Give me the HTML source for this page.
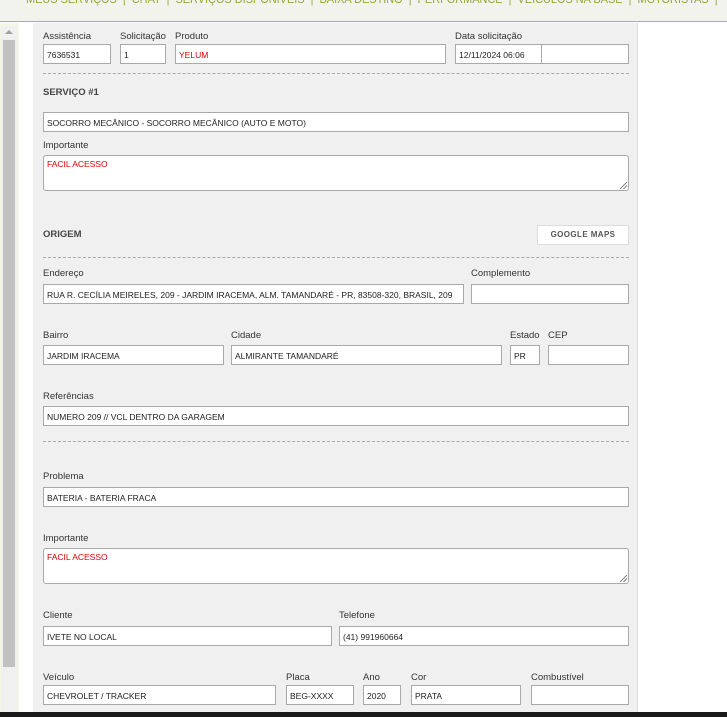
<!DOCTYPE html>
<html><head><meta charset="utf-8"><style>
*{margin:0;padding:0;box-sizing:border-box}
body{width:727px;height:717px;overflow:hidden;background:#fff;position:relative;font-family:"Liberation Sans",Tahoma,sans-serif;font-size:9px;color:#333}
.a{position:absolute}
.nav{left:0;top:0;width:727px;height:22px;background:#f3f3ee;border-bottom:1px solid #a8bc50;overflow:hidden}
.nav span{position:absolute;top:-8px;left:26px;white-space:nowrap;color:#94a83a;font-size:12px;transform:scaleX(0.91);transform-origin:left top}
.lc{left:0;top:23px;width:19px;height:694px;background:#f6f6e4}
.track{left:1px;top:26px;width:16px;height:686px;background:#f0f0f0}
.thumb{left:3px;top:40px;width:12px;height:627px;background:#c1c1c1}
.arr{left:5px;top:30px;width:0;height:0;border-left:4px solid transparent;border-right:4px solid transparent;border-bottom:4px solid #a0a0a0}
.panel{left:33px;top:23px;width:605px;height:694px;background:#f0f0f0;border-right:1px solid #ddd}
.l{position:absolute;font-size:9.5px;color:#333;white-space:nowrap}
.i{position:absolute;height:20px;background:#fff;border:1px solid #a9a9a9;font-size:8.5px;padding:5px 3px;white-space:nowrap;overflow:hidden;color:#222}
.t{height:36px;border-radius:3px;padding:3px 3px}
.t::after{content:"";position:absolute;right:1px;bottom:1px;width:7px;height:7px;background:linear-gradient(135deg,transparent 45%,#888 45%,#888 55%,transparent 55%,transparent 70%,#888 70%,#888 80%,transparent 80%)}
.r{color:#d00}
.d{position:absolute;left:43px;width:586px;border-top:1px dashed #aaa}
.h{position:absolute;left:43px;font-weight:bold;font-size:9.5px;color:#444}
.btn{left:537px;top:225px;width:92px;height:20px;background:#fff;border:1px solid #ddd;font-size:8px;font-weight:bold;color:#555;text-align:center;line-height:18px;letter-spacing:.4px}
.bot{left:0;top:712px;width:727px;height:5px;background:#1a1a1a}
</style></head><body>
<div class="a nav"><span>MEUS SERVIÇOS &nbsp;|&nbsp; CHAT &nbsp;|&nbsp; SERVIÇOS DISPONÍVEIS &nbsp;|&nbsp; BAIXA DESTINO &nbsp;|&nbsp; PERFORMANCE &nbsp;|&nbsp; VEÍCULOS NA BASE &nbsp;|&nbsp; MOTORISTAS &nbsp;|</span></div>
<div class="a lc"></div><div class="a track"></div><div class="a thumb"></div><div class="a arr"></div>
<div class="a panel"></div>

<div class="l" style="left:43px;top:31px">Assistência</div>
<div class="l" style="left:120px;top:31px">Solicitação</div>
<div class="l" style="left:175px;top:31px">Produto</div>
<div class="l" style="left:455px;top:31px">Data solicitação</div>
<div class="i" style="left:43px;top:44px;width:68px">7636531</div>
<div class="i" style="left:120px;top:44px;width:46px">1</div>
<div class="i r" style="left:175px;top:44px;width:271px">YELUM</div>
<div class="i" style="left:455px;top:44px;width:87px">12/11/2024 06:06</div>
<div class="i" style="left:541px;top:44px;width:88px"></div>
<div class="d" style="top:73px"></div>
<div class="h" style="top:87px">SERVIÇO #1</div>
<div class="i" style="left:43px;top:112px;width:586px">SOCORRO MECÂNICO - SOCORRO MECÂNICO (AUTO E MOTO)</div>
<div class="l" style="left:43px;top:140px">Importante</div>
<div class="i t r" style="left:43px;top:155px;width:586px">FACIL ACESSO</div>
<div class="h" style="top:229px">ORIGEM</div>
<div class="a btn">GOOGLE MAPS</div>
<div class="d" style="top:257px"></div>
<div class="l" style="left:43px;top:268px">Endereço</div>
<div class="l" style="left:471px;top:268px">Complemento</div>
<div class="i" style="left:43px;top:284px;width:421px">RUA R. CECÍLIA MEIRELES, 209 - JARDIM IRACEMA, ALM. TAMANDARÉ - PR, 83508-320, BRASIL, 209</div>
<div class="i" style="left:471px;top:284px;width:158px"></div>
<div class="l" style="left:43px;top:330px">Bairro</div>
<div class="l" style="left:231px;top:330px">Cidade</div>
<div class="l" style="left:510px;top:330px">Estado</div>
<div class="l" style="left:548px;top:330px">CEP</div>
<div class="i" style="left:43px;top:345px;width:181px">JARDIM IRACEMA</div>
<div class="i" style="left:231px;top:345px;width:271px">ALMIRANTE TAMANDARÉ</div>
<div class="i" style="left:510px;top:345px;width:30px">PR</div>
<div class="i" style="left:548px;top:345px;width:81px"></div>
<div class="l" style="left:43px;top:391px">Referências</div>
<div class="i" style="left:43px;top:406px;width:586px">NUMERO 209 // VCL DENTRO DA GARAGEM</div>
<div class="d" style="top:441px"></div>
<div class="l" style="left:43px;top:471px">Problema</div>
<div class="i" style="left:43px;top:487px;width:586px">BATERIA - BATERIA FRACA</div>
<div class="l" style="left:43px;top:533px">Importante</div>
<div class="i t r" style="left:43px;top:548px;width:586px">FACIL ACESSO</div>
<div class="l" style="left:43px;top:610px">Cliente</div>
<div class="l" style="left:339px;top:610px">Telefone</div>
<div class="i" style="left:43px;top:626px;width:289px">IVETE NO LOCAL</div>
<div class="i" style="left:339px;top:626px;width:290px">(41) 991960664</div>
<div class="l" style="left:43px;top:672px">Veículo</div>
<div class="l" style="left:286px;top:672px">Placa</div>
<div class="l" style="left:363px;top:672px">Ano</div>
<div class="l" style="left:411px;top:672px">Cor</div>
<div class="l" style="left:531px;top:672px">Combustível</div>
<div class="i" style="left:43px;top:685px;width:233px">CHEVROLET / TRACKER</div>
<div class="i" style="left:286px;top:685px;width:68px">BEG-XXXX</div>
<div class="i" style="left:363px;top:685px;width:38px">2020</div>
<div class="i" style="left:411px;top:685px;width:110px">PRATA</div>
<div class="i" style="left:531px;top:685px;width:98px"></div>
<div class="a bot"></div>
</body></html>
